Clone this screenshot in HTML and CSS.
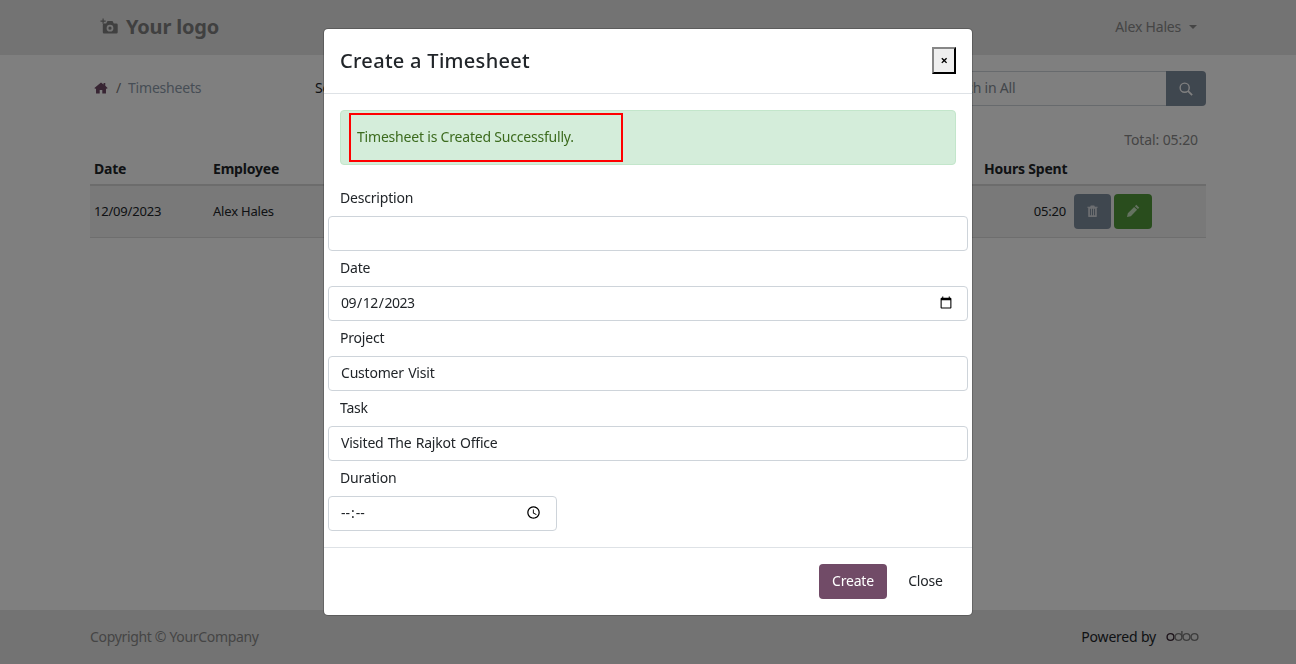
FILE: index.html
```html
<!DOCTYPE html>
<html lang="en">
<head>
    <meta charset="UTF-8">
    <meta name="viewport" content="width=device-width, initial-scale=1.0">
    <title>Timesheets</title>
    <link rel="stylesheet" href="styles.css">
</head>
<body>
    <div class="page">
        <header class="topbar">
            <div class="brand">
                <svg class="brand-icon" viewBox="0 0 18 16" width="18" height="16">
                    <path d="M2.5 0.5h1.200v2h2v1.200h-2v2H2.500v-2h-2V2.500h2z"/>
                    <path fill-rule="evenodd" d="M4 5.500h2.200L7.500 3h5l1.300 2.500h2.700a1.200 1.200 0 0 1 1.200 1.200v7.600a1.200 1.200 0 0 1-1.200 1.200H4a1.200 1.200 0 0 1-1.200-1.200V6.700A1.200 1.200 0 0 1 4 5.500zM10 6.800a3.400 3.400 0 1 0 0 6.800 3.400 3.400 0 0 0 0-6.800zM10 8.600a1.600 1.600 0 1 1 0 3.200 1.600 1.600 0 0 1 0-3.200z"/>
                </svg>
                <span class="brand-name">Your logo</span>
            </div>
            <div class="user-menu">Alex Hales<span class="caret"></span></div>
        </header>

        <main class="content">
            <div class="toolbar">
                <nav class="crumbs">
                    <svg class="home-icon" viewBox="0 0 16 14" width="14" height="12">
                        <path d="M8 0.500L0.300 7l0.900 1.100L2.200 7.300V13.500h4.300V9.300h3V13.500h4.300V7.300l1 .8.900-1.100L13 4.500V1.200h-2v1.600z"/>
                    </svg>
                    <span class="crumb-sep">/</span>
                    <a class="crumb-link">Timesheets</a>
                </nav>
                <span class="sort-label">Select</span>
                <div class="search">
                    <input class="search-input" type="text" placeholder="Search in All">
                    <button class="search-btn">
                        <svg viewBox="0 0 16 16" width="14" height="14" fill="none" stroke="currentColor" stroke-width="1.600">
                            <circle cx="6.500" cy="6.500" r="5.200"/>
                            <path d="M10.400 10.400L15 15" stroke-width="2"/>
                        </svg>
                    </button>
                </div>
            </div>

            <p class="total">Total: 05:20</p>

            <table class="sheet">
                <colgroup>
                    <col class="col-date">
                    <col class="col-employee">
                    <col class="col-hours">
                    <col class="col-actions">
                </colgroup>
                <thead>
                    <tr>
                        <th>Date</th>
                        <th>Employee</th>
                        <th>Hours Spent</th>
                        <th></th>
                    </tr>
                </thead>
                <tbody>
                    <tr>
                        <td>12/09/2023</td>
                        <td>Alex Hales</td>
                        <td class="num">05:20</td>
                        <td>
                            <div class="actions">
                                <button class="act act-delete">
                                    <svg viewBox="0 0 12 14" width="11" height="12" fill="currentColor">
                                        <path d="M4 0.500h4l.8 1.500H12v1.200h-1V13a1 1 0 0 1-1 1H2a1 1 0 0 1-1-1V3.200H0V2h3.200zM3 4.500v7.500h1.200V4.500zM5.400 4.500v7.500h1.200V4.500zM7.800 4.500v7.500H9V4.500z" fill-rule="evenodd"/>
                                    </svg>
                                </button>
                                <button class="act act-edit">
                                    <svg viewBox="0 0 14 14" width="13" height="13" fill="currentColor">
                                        <path d="M10 0.800l3.200 3.200-1.500 1.500-3.200-3.200zM7.700 3.100l3.200 3.200-6.800 6.800-4.100 .9 .9-4.100z"/>
                                    </svg>
                                </button>
                            </div>
                        </td>
                    </tr>
                </tbody>
            </table>
        </main>

        <footer class="bottombar">
            <span class="copyright">Copyright © YourCompany</span>
            <span class="powered">Powered by
                <svg class="odoo" viewBox="0 0 33 12" width="33" height="12" fill="none" stroke-width="1.400">
                    <circle cx="4.500" cy="7" r="3.400" stroke="#3a2634"/>
                    <circle cx="12.500" cy="7" r="3.400" stroke="#7a7a7a"/>
                    <path d="M15.900 1v6" stroke="#7a7a7a"/>
                    <circle cx="20.500" cy="7" r="3.400" stroke="#7a7a7a"/>
                    <circle cx="28.500" cy="7" r="3.400" stroke="#7a7a7a"/>
                </svg>
            </span>
        </footer>
    </div>

    <div class="backdrop"></div>

    <div class="modal-wrap">
        <div class="modal">
            <div class="modal-header">
                <h4 class="modal-title">Create a Timesheet</h4>
                <button class="modal-x">×</button>
            </div>
            <div class="modal-body">
                <div class="alert">
                    <div class="alert-mark">Timesheet is Created Successfully.</div>
                </div>
                <div class="field">
                    <label>Description</label>
                    <input type="text">
                </div>
                <div class="field">
                    <label>Date</label>
                    <input type="date" value="2023-09-12">
                </div>
                <div class="field">
                    <label>Project</label>
                    <input type="text" value="Customer Visit">
                </div>
                <div class="field">
                    <label>Task</label>
                    <input type="text" value="Visited The Rajkot Office">
                </div>
                <div class="field field-short">
                    <label>Duration</label>
                    <input type="time">
                </div>
            </div>
            <div class="modal-footer">
                <button class="btn-create">Create</button>
                <button class="btn-close">Close</button>
            </div>
        </div>
    </div>
</body>
</html>
```

FILE: styles.css
```css
* {
    box-sizing: border-box;
}

body {
    margin: 0;
    font-family: "Noto Sans", sans-serif;
    font-size: 14px;
    line-height: 21px;
    letter-spacing: -0.2px;
    color: #212529;
    background: #fff;
}

button {
    font-family: inherit;
    letter-spacing: inherit;
}

/* page under the dialog */
.page {
    height: 664px;
    display: flex;
    flex-direction: column;
    overflow: hidden;
}

.topbar {
    height: 55px;
    padding: 0 99px 3px 100px;
    display: flex;
    align-items: center;
    justify-content: space-between;
    background: #e6e6e6;
}

.brand {
    display: flex;
    align-items: center;
    gap: 8px;
    color: #808080;
}

.brand-icon {
    fill: #808080;
}

.brand-name {
    font-size: 20px;
    font-weight: 700;
    letter-spacing: -0.2px;
}

.user-menu {
    color: #8a8a8a;
}

.caret {
    display: inline-block;
    margin-left: 8px;
    vertical-align: 3px;
    border-top: 4px solid #8a8a8a;
    border-left: 4px solid transparent;
    border-right: 4px solid transparent;
}

.content {
    flex: 1;
    padding: 16px 90px 0;
}

.toolbar {
    height: 35px;
    display: flex;
    align-items: center;
    padding-bottom: 2px;
}

.crumbs {
    width: 225px;
    padding-left: 4px;
    display: flex;
    align-items: center;
}

.home-icon {
    fill: #714b67;
}

.crumb-sep {
    margin: 0 7px 0 8px;
    color: #7a7a7a;
}

.crumb-link {
    color: #8d9bab;
}

.sort-label {
    color: #212529;
}

.search {
    align-self: flex-start;
    margin-left: auto;
    width: 281px;
    height: 35px;
    display: flex;
}

.search-input {
    flex: 1;
    min-width: 0;
    height: 35px;
    padding: 0 12px 2px;
    font: inherit;
    letter-spacing: inherit;
    background: #fff;
    border: 1px solid #ced4da;
    border-right: 0;
    border-radius: 4px 0 0 4px;
}

.search-input::placeholder {
    color: #858d96;
}

.search-btn {
    width: 40px;
    height: 35px;
    display: flex;
    align-items: center;
    justify-content: center;
    color: #fff;
    background: #7f8e9f;
    border: 0;
    border-radius: 0 4px 4px 0;
}

.total {
    margin: 0;
    padding: 23px 8px 0 0;
    text-align: right;
    color: #8a8a8a;
    letter-spacing: -0.1px;
}

.sheet {
    width: 100%;
    margin-top: 5px;
    table-layout: fixed;
    border-collapse: collapse;
}

.col-date {
    width: 119px;
}

.col-hours {
    width: 90px;
}

.col-actions {
    width: 136px;
}

.sheet th {
    height: 30px;
    padding: 0 4px 3px;
    text-align: left;
    font-weight: 700;
    white-space: nowrap;
    border-bottom: 2px solid #d8d8d8;
}

.sheet td {
    height: 52px;
    padding: 1px 4px 0;
    font-size: 13px;
    background: #f2f2f2;
    border-bottom: 1px solid #dcdcdc;
}

.sheet td.num {
    text-align: right;
}

.actions {
    display: flex;
    gap: 3px;
}

.act {
    width: 37px;
    height: 35px;
    padding: 0;
    border: 0;
    border-radius: 4px;
}

.act-delete {
    background: #7f8e9f;
    color: #d9dde2;
}

.act-edit {
    width: 38px;
    background: #529a3a;
    color: #c8e4c0;
}

.bottombar {
    height: 54px;
    padding: 0 97px 2px 90px;
    display: flex;
    align-items: center;
    justify-content: space-between;
    background: #e6e6e6;
}

.copyright {
    color: #8a8a8a;
    letter-spacing: -0.33px;
}

.powered {
    display: flex;
    align-items: center;
    gap: 10px;
    color: #212529;
}

/* dialog */
.backdrop {
    position: fixed;
    inset: 0;
    background: rgba(0, 0, 0, 0.5);
}

.modal-wrap {
    position: fixed;
    inset: 0;
    padding-top: 28px;
    display: flex;
    justify-content: center;
    align-items: flex-start;
}

.modal {
    width: 650px;
    background: #fff;
    border: 1px solid rgba(0, 0, 0, 0.2);
    border-radius: 5px;
    background-clip: padding-box;
}

.modal-header {
    height: 65px;
    padding: 0 16px;
    display: flex;
    align-items: center;
    justify-content: space-between;
    border-bottom: 1px solid #dee2e6;
}

.modal-title {
    margin: 0 0 2px;
    font-size: 20px;
    font-weight: 500;
    letter-spacing: 0.3px;
}

.modal-x {
    width: 24px;
    height: 27px;
    margin-bottom: 2px;
    padding: 0;
    font-size: 13px;
    font-weight: 700;
    color: #000;
    background: #efefef;
    border: 2px outset #333;
}

.modal-body {
    padding: 16px;
}

.alert {
    height: 55px;
    margin-bottom: 22px;
    padding: 2px 8px;
    background: #d4edda;
    border: 1px solid #c3e6cb;
    border-radius: 4px;
}

.alert-mark {
    width: 274px;
    height: 49px;
    padding: 0 6px 2px;
    display: flex;
    align-items: center;
    color: #3c6b1e;
    border: 2px solid #f00;
}

.field {
    margin-bottom: 6px;
}

.field:last-child {
    margin-bottom: 0;
}

.field label {
    display: block;
    height: 21px;
    margin-bottom: 8px;
}

.field input {
    display: block;
    width: 640px;
    height: 35px;
    margin-left: -12px;
    padding: 0 12px 2px;
    font: inherit;
    letter-spacing: inherit;
    word-spacing: 0.8px;
    color: #212529;
    background: #fff;
    border: 1px solid #ced4da;
    border-radius: 4px;
}

.field input[type="date"],
.field input[type="time"] {
    padding-left: 11px;
    letter-spacing: -0.5px;
}

.field input::-webkit-datetime-edit-ampm-field {
    display: none;
}

.field-short input {
    width: 229px;
}

.modal-footer {
    height: 68px;
    padding: 16px;
    display: flex;
    justify-content: flex-end;
    align-items: flex-start;
    gap: 8px;
    border-top: 1px solid #dee2e6;
}

.btn-create,
.btn-close {
    height: 35px;
    padding: 0 0 2px;
    font-size: 14px;
    border: 0;
}

.btn-create {
    width: 68px;
    color: #fff;
    background: #714b67;
    border-radius: 4px;
}

.btn-close {
    width: 61px;
    color: #212529;
    background: none;
}
```
